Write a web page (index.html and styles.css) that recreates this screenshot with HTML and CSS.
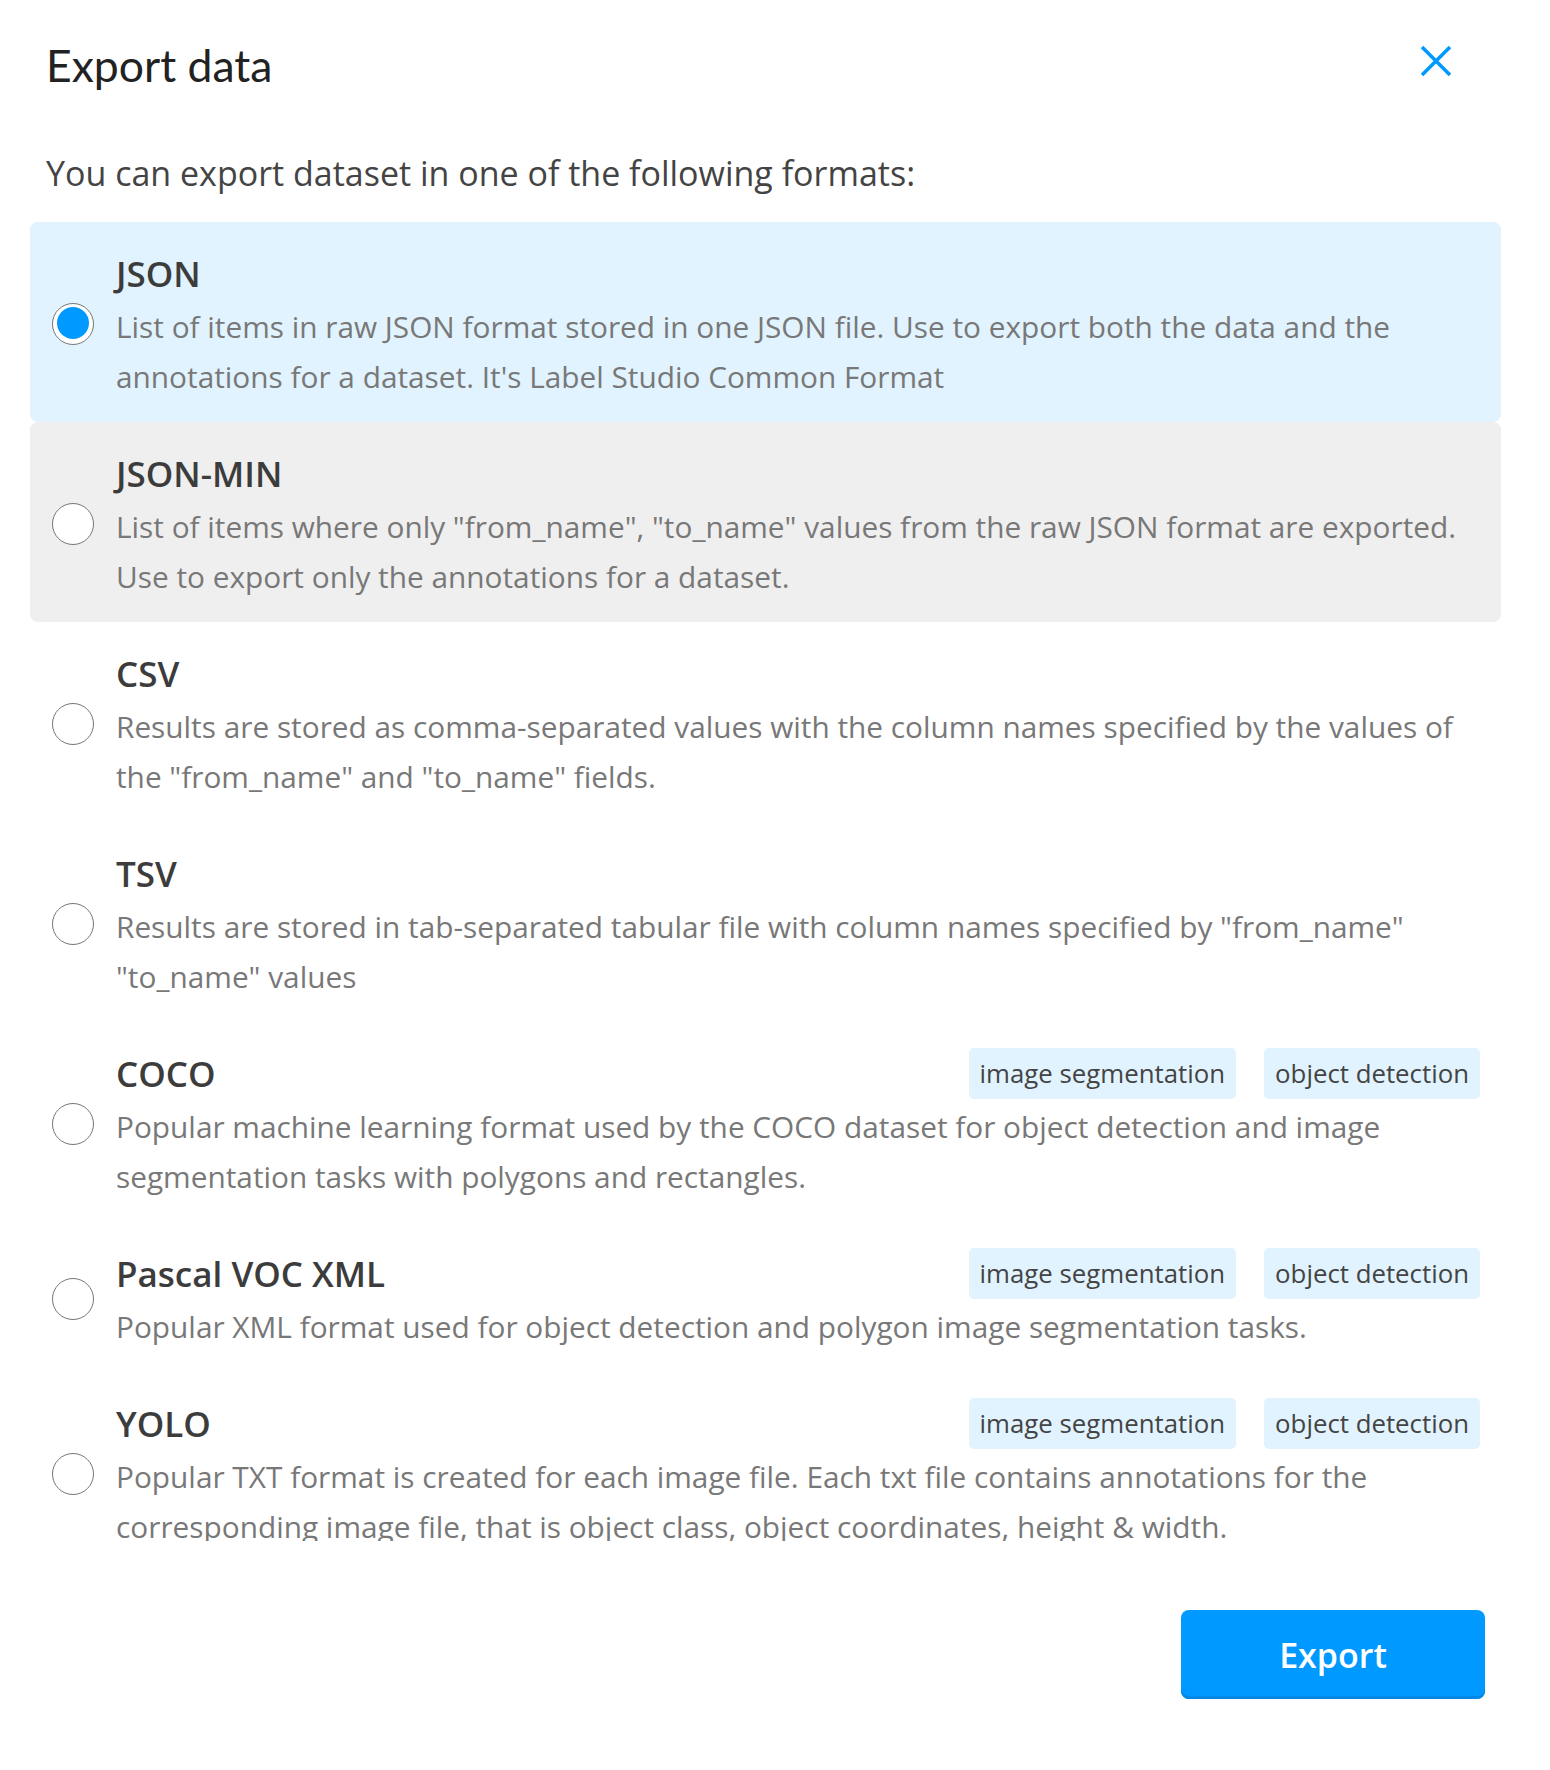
FILE: index.html
```html
<!DOCTYPE html>
<html lang="en">
<head>
<meta charset="utf-8">
<title>Export data</title>
<link rel="stylesheet" href="styles.css">
</head>
<body>
<div class="modal">
  <div class="header">
    <h1 class="title">Export data</h1>
    <button class="close" aria-label="Close">
      <svg viewBox="0 0 32 32" width="32" height="32"><path d="M2 2 L30 30 M30 2 L2 30" stroke="#0099ff" stroke-width="3.6" fill="none"/></svg>
    </button>
  </div>
  <p class="subtitle">You can export dataset in one of the following formats:</p>
  <div class="list">
    <div class="item selected">
      <span class="radio checked"></span>
      <div class="body">
        <div class="row"><span class="name">JSON</span></div>
        <div class="desc">List of items in raw JSON format stored in one JSON file. Use to export both the data and the annotations for a dataset. It's Label Studio Common Format</div>
      </div>
    </div>
    <div class="item hover">
      <span class="radio"></span>
      <div class="body">
        <div class="row"><span class="name">JSON-MIN</span></div>
        <div class="desc">List of items where only "from_name", "to_name" values from the raw JSON format are exported. Use to export only the annotations for a dataset.</div>
      </div>
    </div>
    <div class="item">
      <span class="radio"></span>
      <div class="body">
        <div class="row"><span class="name">CSV</span></div>
        <div class="desc">Results are stored as comma-separated values with the column names specified by the values of the "from_name" and "to_name" fields.</div>
      </div>
    </div>
    <div class="item">
      <span class="radio"></span>
      <div class="body">
        <div class="row"><span class="name">TSV</span></div>
        <div class="desc">Results are stored in tab-separated tabular file with column names specified by "from_name" "to_name" values</div>
      </div>
    </div>
    <div class="item">
      <span class="radio"></span>
      <div class="body">
        <div class="row"><span class="name">COCO</span><span class="tags"><span class="tag">image segmentation</span><span class="tag">object detection</span></span></div>
        <div class="desc">Popular machine learning format used by the COCO dataset for object detection and image segmentation tasks with polygons and rectangles.</div>
      </div>
    </div>
    <div class="item">
      <span class="radio"></span>
      <div class="body">
        <div class="row"><span class="name">Pascal VOC XML</span><span class="tags"><span class="tag">image segmentation</span><span class="tag">object detection</span></span></div>
        <div class="desc">Popular XML format used for object detection and polygon image segmentation tasks.</div>
      </div>
    </div>
    <div class="item">
      <span class="radio"></span>
      <div class="body">
        <div class="row"><span class="name">YOLO</span><span class="tags"><span class="tag">image segmentation</span><span class="tag">object detection</span></span></div>
        <div class="desc">Popular TXT format is created for each image file. Each txt file contains annotations for the corresponding image file, that is object class, object coordinates, height &amp; width.</div>
      </div>
    </div>
  </div>
  <div class="footer">
    <button class="export">Export</button>
  </div>
</div>
</body>
</html>
```

FILE: styles.css
```css
* { box-sizing: border-box; }
html, body { margin: 0; padding: 0; background: #fff; }
body { font-family: "Open Sans", "Noto Sans", sans-serif; }

.modal {
  width: 1550px;
  height: 1770px;
  padding: 0 49px 0 30px;
  display: flex;
  flex-direction: column;
}

.header {
  display: flex;
  justify-content: space-between;
  align-items: flex-start;
  padding: 37px 49px 0 16px;
}
.title {
  margin: 0;
  font-family: "Lato", "Open Sans", sans-serif;
  font-weight: 400;
  font-size: 44.5px;
  line-height: 56px;
  color: #222;
}
.close {
  margin-top: 8px;
  width: 32px;
  height: 32px;
  padding: 0;
  border: 0;
  background: none;
  display: block;
}
.close svg { display: block; }

.subtitle {
  margin: 60px 0 0 16px;
  font-size: 34px;
  line-height: 40px;
  color: #444;
}

.list {
  margin-top: 29px;
  height: 1319px;
  overflow: hidden;
}

.item {
  display: flex;
  align-items: center;
  gap: 22px;
  padding: 23px 21px 20px 22px;
  border-radius: 8px;
}
.item.selected { background: #e1f3fe; }
.item.hover { background: #efefef; }

.radio {
  flex: none;
  width: 42px;
  height: 42px;
  border-radius: 50%;
  border: 1.5px solid #777;
  background: #fff;
  position: relative;
}
.radio.checked::after {
  content: "";
  position: absolute;
  left: 3.5px;
  top: 3.5px;
  width: 32px;
  height: 32px;
  border-radius: 50%;
  background: #0099ff;
}

.body { flex: 1; min-width: 0; }
.row {
  display: flex;
  justify-content: space-between;
  align-items: center;
  height: 57px;
}
.name {
  font-size: 35px;
  font-weight: 600;
  line-height: 57px;
  color: #3c3c3c;
}
.tags { display: flex; gap: 28px; }
.tag {
  background: #e1f3fe;
  border-radius: 5px;
  padding: 0 11px;
  height: 51px;
  line-height: 51px;
  font-size: 25.8px;
  color: #444;
}
.desc {
  font-size: 29.8px;
  line-height: 50px;
  color: #787878;
  padding-right: 6px;
}

.footer {
  display: flex;
  justify-content: flex-end;
  padding: 69px 16px 0 0;
}
.export {
  width: 304px;
  height: 89px;
  border: 0;
  border-radius: 8px;
  background: #0099ff;
  box-shadow: inset 0 -3px 0 #0088e6;
  color: #fff;
  font-family: "Open Sans", sans-serif;
  font-size: 34px;
  font-weight: 600;
}
```
